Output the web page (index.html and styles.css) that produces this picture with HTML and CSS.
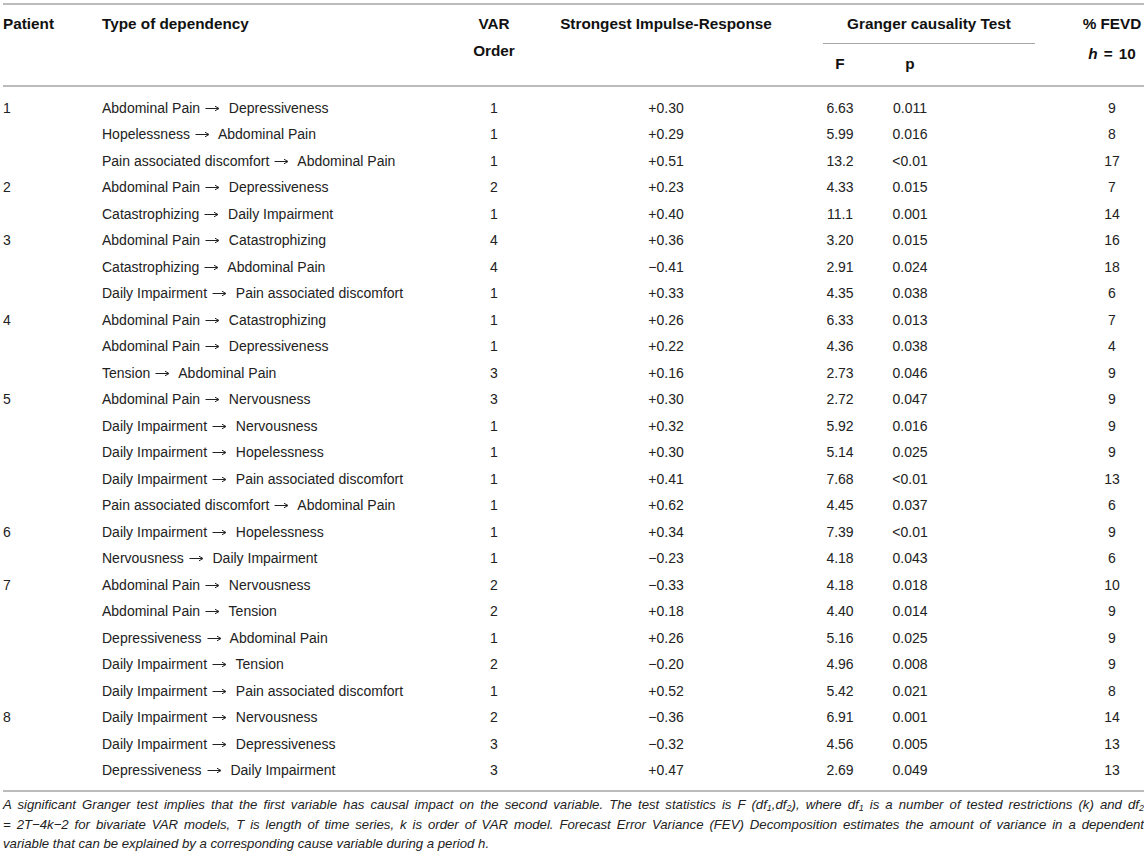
FILE: index.html
```html
<!DOCTYPE html>
<html lang="en">
<head>
<meta charset="utf-8">
<title>Granger causality table</title>
<link rel="stylesheet" href="styles.css">
</head>
<body>
<svg class="defs" width="0" height="0" aria-hidden="true">
  <defs>
    <g id="arrow">
      <path d="M0.5 4.5 H13" stroke="#222" stroke-width="1" fill="none"/>
      <path d="M10 2.2 L14 4.5 L10 6.8" stroke="#222" stroke-width="1" fill="none"/>
    </g>
  </defs>
</svg>
<div class="page">
<table class="tbl">
  <colgroup>
    <col class="c-pat">
    <col class="c-type">
    <col class="c-var">
    <col class="c-irf">
    <col class="c-f">
    <col class="c-p">
    <col class="c-fevd">
  </colgroup>
  <thead>
    <tr class="hr1">
      <th rowspan="2" class="h-left h-span">Patient</th>
      <th rowspan="2" class="h-left h-span">Type of dependency</th>
      <th rowspan="2" class="h-center h-span">VAR<br>Order</th>
      <th rowspan="2" class="h-center h-span">Strongest Impulse-Response</th>
      <th colspan="2" class="h-granger"><div class="granger-in">Granger causality Test</div></th>
      <th rowspan="2" class="h-center h-span h-fevd">% FEVD<span class="hval"><i>h</i><span class="eq">=</span>10</span></th>
    </tr>
    <tr class="hr2">
      <th class="h-center h-f">F</th>
      <th class="h-center h-p">p</th>
    </tr>
  </thead>
  <tbody>
    <tr class="first"><td>1</td><td>Abdominal Pain <svg class="arr" viewBox="0 0 15 9"><use href="#arrow"/></svg> Depressiveness</td><td class="c">1</td><td class="c">+0.30</td><td class="c">6.63</td><td class="c pv">0.011</td><td class="c fv">9</td></tr>
    <tr><td></td><td>Hopelessness <svg class="arr" viewBox="0 0 15 9"><use href="#arrow"/></svg> Abdominal Pain</td><td class="c">1</td><td class="c">+0.29</td><td class="c">5.99</td><td class="c pv">0.016</td><td class="c fv">8</td></tr>
    <tr><td></td><td>Pain associated discomfort <svg class="arr" viewBox="0 0 15 9"><use href="#arrow"/></svg> Abdominal Pain</td><td class="c">1</td><td class="c">+0.51</td><td class="c">13.2</td><td class="c pv">&lt;0.01</td><td class="c fv">17</td></tr>
    <tr><td>2</td><td>Abdominal Pain <svg class="arr" viewBox="0 0 15 9"><use href="#arrow"/></svg> Depressiveness</td><td class="c">2</td><td class="c">+0.23</td><td class="c">4.33</td><td class="c pv">0.015</td><td class="c fv">7</td></tr>
    <tr><td></td><td>Catastrophizing <svg class="arr" viewBox="0 0 15 9"><use href="#arrow"/></svg> Daily Impairment</td><td class="c">1</td><td class="c">+0.40</td><td class="c">11.1</td><td class="c pv">0.001</td><td class="c fv">14</td></tr>
    <tr><td>3</td><td>Abdominal Pain <svg class="arr" viewBox="0 0 15 9"><use href="#arrow"/></svg> Catastrophizing</td><td class="c">4</td><td class="c">+0.36</td><td class="c">3.20</td><td class="c pv">0.015</td><td class="c fv">16</td></tr>
    <tr><td></td><td>Catastrophizing <svg class="arr" viewBox="0 0 15 9"><use href="#arrow"/></svg> Abdominal Pain</td><td class="c">4</td><td class="c">−0.41</td><td class="c">2.91</td><td class="c pv">0.024</td><td class="c fv">18</td></tr>
    <tr><td></td><td>Daily Impairment <svg class="arr" viewBox="0 0 15 9"><use href="#arrow"/></svg> Pain associated discomfort</td><td class="c">1</td><td class="c">+0.33</td><td class="c">4.35</td><td class="c pv">0.038</td><td class="c fv">6</td></tr>
    <tr><td>4</td><td>Abdominal Pain <svg class="arr" viewBox="0 0 15 9"><use href="#arrow"/></svg> Catastrophizing</td><td class="c">1</td><td class="c">+0.26</td><td class="c">6.33</td><td class="c pv">0.013</td><td class="c fv">7</td></tr>
    <tr><td></td><td>Abdominal Pain <svg class="arr" viewBox="0 0 15 9"><use href="#arrow"/></svg> Depressiveness</td><td class="c">1</td><td class="c">+0.22</td><td class="c">4.36</td><td class="c pv">0.038</td><td class="c fv">4</td></tr>
    <tr><td></td><td>Tension <svg class="arr" viewBox="0 0 15 9"><use href="#arrow"/></svg> Abdominal Pain</td><td class="c">3</td><td class="c">+0.16</td><td class="c">2.73</td><td class="c pv">0.046</td><td class="c fv">9</td></tr>
    <tr><td>5</td><td>Abdominal Pain <svg class="arr" viewBox="0 0 15 9"><use href="#arrow"/></svg> Nervousness</td><td class="c">3</td><td class="c">+0.30</td><td class="c">2.72</td><td class="c pv">0.047</td><td class="c fv">9</td></tr>
    <tr><td></td><td>Daily Impairment <svg class="arr" viewBox="0 0 15 9"><use href="#arrow"/></svg> Nervousness</td><td class="c">1</td><td class="c">+0.32</td><td class="c">5.92</td><td class="c pv">0.016</td><td class="c fv">9</td></tr>
    <tr><td></td><td>Daily Impairment <svg class="arr" viewBox="0 0 15 9"><use href="#arrow"/></svg> Hopelessness</td><td class="c">1</td><td class="c">+0.30</td><td class="c">5.14</td><td class="c pv">0.025</td><td class="c fv">9</td></tr>
    <tr><td></td><td>Daily Impairment <svg class="arr" viewBox="0 0 15 9"><use href="#arrow"/></svg> Pain associated discomfort</td><td class="c">1</td><td class="c">+0.41</td><td class="c">7.68</td><td class="c pv">&lt;0.01</td><td class="c fv">13</td></tr>
    <tr><td></td><td>Pain associated discomfort <svg class="arr" viewBox="0 0 15 9"><use href="#arrow"/></svg> Abdominal Pain</td><td class="c">1</td><td class="c">+0.62</td><td class="c">4.45</td><td class="c pv">0.037</td><td class="c fv">6</td></tr>
    <tr><td>6</td><td>Daily Impairment <svg class="arr" viewBox="0 0 15 9"><use href="#arrow"/></svg> Hopelessness</td><td class="c">1</td><td class="c">+0.34</td><td class="c">7.39</td><td class="c pv">&lt;0.01</td><td class="c fv">9</td></tr>
    <tr><td></td><td>Nervousness <svg class="arr" viewBox="0 0 15 9"><use href="#arrow"/></svg> Daily Impairment</td><td class="c">1</td><td class="c">−0.23</td><td class="c">4.18</td><td class="c pv">0.043</td><td class="c fv">6</td></tr>
    <tr><td>7</td><td>Abdominal Pain <svg class="arr" viewBox="0 0 15 9"><use href="#arrow"/></svg> Nervousness</td><td class="c">2</td><td class="c">−0.33</td><td class="c">4.18</td><td class="c pv">0.018</td><td class="c fv">10</td></tr>
    <tr><td></td><td>Abdominal Pain <svg class="arr" viewBox="0 0 15 9"><use href="#arrow"/></svg> Tension</td><td class="c">2</td><td class="c">+0.18</td><td class="c">4.40</td><td class="c pv">0.014</td><td class="c fv">9</td></tr>
    <tr><td></td><td>Depressiveness <svg class="arr" viewBox="0 0 15 9"><use href="#arrow"/></svg> Abdominal Pain</td><td class="c">1</td><td class="c">+0.26</td><td class="c">5.16</td><td class="c pv">0.025</td><td class="c fv">9</td></tr>
    <tr><td></td><td>Daily Impairment <svg class="arr" viewBox="0 0 15 9"><use href="#arrow"/></svg> Tension</td><td class="c">2</td><td class="c">−0.20</td><td class="c">4.96</td><td class="c pv">0.008</td><td class="c fv">9</td></tr>
    <tr><td></td><td>Daily Impairment <svg class="arr" viewBox="0 0 15 9"><use href="#arrow"/></svg> Pain associated discomfort</td><td class="c">1</td><td class="c">+0.52</td><td class="c">5.42</td><td class="c pv">0.021</td><td class="c fv">8</td></tr>
    <tr><td>8</td><td>Daily Impairment <svg class="arr" viewBox="0 0 15 9"><use href="#arrow"/></svg> Nervousness</td><td class="c">2</td><td class="c">−0.36</td><td class="c">6.91</td><td class="c pv">0.001</td><td class="c fv">14</td></tr>
    <tr><td></td><td>Daily Impairment <svg class="arr" viewBox="0 0 15 9"><use href="#arrow"/></svg> Depressiveness</td><td class="c">3</td><td class="c">−0.32</td><td class="c">4.56</td><td class="c pv">0.005</td><td class="c fv">13</td></tr>
    <tr class="last"><td></td><td>Depressiveness <svg class="arr" viewBox="0 0 15 9"><use href="#arrow"/></svg> Daily Impairment</td><td class="c">3</td><td class="c">+0.47</td><td class="c">2.69</td><td class="c pv">0.049</td><td class="c fv">13</td></tr>
  </tbody>
</table>
<div class="note">
  <span class="nl just">A significant Granger test implies that the first variable has causal impact on the second variable. The test statistics is F (df<sub>1</sub>,df<sub>2</sub>), where df<sub>1</sub> is a number of tested restrictions (k) and df<sub>2</sub></span>
  <span class="nl just">= 2T−4k−2 for bivariate VAR models, T is length of time series, k is order of VAR model. Forecast Error Variance (FEV) Decomposition estimates the amount of variance in a dependent</span>
  <span class="nl">variable that can be explained by a corresponding cause variable during a period h.</span>
</div>
</div>
</body>
</html>
```

FILE: styles.css
```css
html, body {
  margin: 0;
  padding: 0;
  background: #ffffff;
}

.defs {
  position: absolute;
  width: 0;
  height: 0;
  overflow: hidden;
}

.page {
  padding: 3px 0 0 3px;
  font-family: "Liberation Sans", Arial, sans-serif;
  color: #222;
}

.tbl {
  table-layout: fixed;
  width: 1141px;
  border-collapse: separate;
  border-spacing: 0;
}

.c-pat { width: 99px; }
.c-type { width: 352px; }
.c-var { width: 80px; }
.c-irf { width: 264px; }
.c-f { width: 84px; }
.c-p { width: 153px; }
.c-fevd { width: 109px; }

th {
  font-size: 15.3px;
  font-weight: bold;
  line-height: 27px;
  color: #111;
  padding: 0;
  vertical-align: top;
}

.hr1 th {
  border-top: 2px solid #bcbcbc;
}

.h-left { text-align: left; }
.h-center { text-align: center; }

.h-span {
  padding-top: 4.5px;
  border-bottom: 2px solid #bcbcbc;
}

.h-fevd {
  padding-left: 45px;
}

.hval {
  display: block;
  padding-top: 3px;
}

.eq {
  margin: 0 6px;
}

.h-granger {
  padding-top: 4.5px;
  padding-left: 25px;
  text-align: center;
}

.granger-in {
  padding-bottom: 6.5px;
  border-bottom: 1px solid #a8a8a8;
}

.h-f, .h-p {
  padding-top: 5.5px;
  padding-bottom: 8.5px;
  border-bottom: 2px solid #bcbcbc;
}

.h-p { padding-right: 97px; }

td {
  font-size: 14px;
  line-height: 26.5px;
  padding: 0;
  white-space: nowrap;
  vertical-align: top;
}

td.c { text-align: center; }
td.pv { padding-right: 97px; }
td.fv { padding-left: 45px; }

tr.first td { padding-top: 7.75px; }
tr.last td {
  padding-bottom: 6.25px;
  border-bottom: 2px solid #bcbcbc;
}

.arr {
  width: 15px;
  height: 9px;
  margin-left: 1px;
  margin-right: 5px;
  vertical-align: 0px;
  overflow: visible;
}

.note {
  width: 1141px;
  margin-top: 3px;
  font-size: 13.2px;
  line-height: 19.5px;
  font-style: italic;
  color: #222;
}

.nl {
  display: block;
  white-space: nowrap;
}

.nl.just {
  text-align: justify;
  text-align-last: justify;
  white-space: normal;
}

sub {
  font-size: 9px;
  line-height: 0;
  vertical-align: -2px;
}
```
